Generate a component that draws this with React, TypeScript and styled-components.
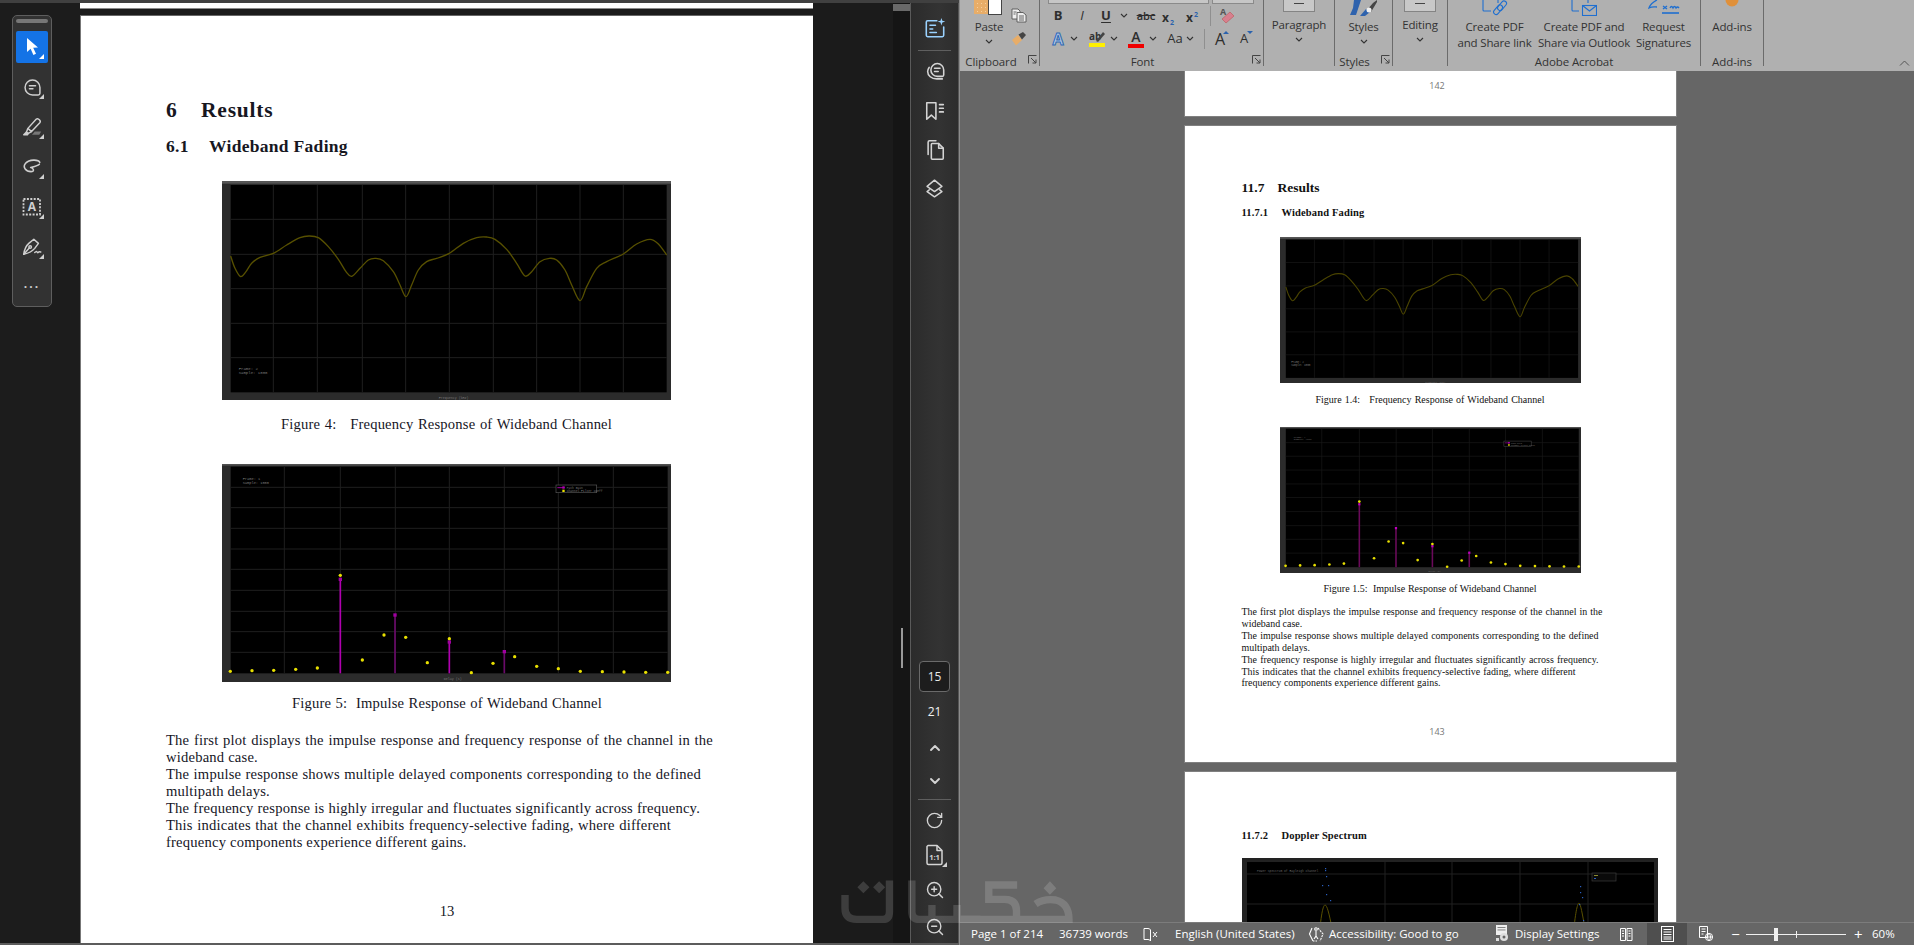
import React from "react";
import styled, { createGlobalStyle } from "styled-components";
import { ChevronUp, ChevronDown, RotateCw, ZoomIn, ZoomOut } from "lucide-react";

const Global = createGlobalStyle`
  html, body { margin: 0; padding: 0; width: 1914px; height: 945px; overflow: hidden; background: #1b1b1b; }
  #root { width: 1914px; height: 945px; }
  * { box-sizing: border-box; }
`;

const UI = `"Open Sans", "Noto Sans", "Liberation Sans", sans-serif`;
const SERIF = `"Liberation Serif", "Times New Roman", serif`;

const Screen = styled.div`
  position: relative; display: flex; width: 1914px; height: 945px; overflow: hidden;
`;

/* ---------- Acrobat side ---------- */
const Acrobat = styled.div`
  width: 959px; height: 945px; display: flex; background: #1b1b1b;
  border-top: 3px solid #404040; border-bottom: 2px solid #5c5c5c;
`;
const ToolColumn = styled.div`width: 80px; flex: none; padding: 12px 0 0 12px; background: #1c1c1c;`;
const ToolPanel = styled.div`
  width: 40px; height: 292px; padding: 3px 3px 0; background: #323232;
  border: 1px solid #5e5e5e; border-radius: 5px;
`;
const Handle = styled.div`height: 4px; margin-bottom: 4px; border-radius: 2px; background: #777;`;
const ToolSlot = styled.div`height: 40px; padding-top: 4px;`;
const ToolBox = styled.div<{ $active?: boolean; $plain?: boolean }>`
  position: relative; width: 32px; height: 32px; display: flex; align-items: center; justify-content: center;
  border-radius: 2px; background: ${p => (p.$active ? "#1473e6" : "transparent")};
  color: ${p => (p.$active ? "#fff" : "#cfcfcf")};
  &::after {
    content: ${p => (p.$plain ? "none" : '""')}; position: absolute; right: 4px; bottom: 4px; width: 5px; height: 5px;
    background: ${p => (p.$active ? "#fff" : "#cfcfcf")}; clip-path: polygon(100% 0, 100% 100%, 0 100%);
  }
`;
const Dots = styled.span`
  font: 700 12px/1 ${UI}; letter-spacing: 2px; color: #cfcfcf; transform: translateY(-3px);
`;
const PdfColumn = styled.div`width: 733px; flex: none; display: flex; flex-direction: column; overflow: hidden;`;
const PdfSliver = styled.div`height: 6px; flex: none; background: #fff; border-bottom: 1px solid #8a8a8a;`;
const PdfPage = styled.div`
  margin-top: 6px; flex: none; height: 932px; background: #fff; padding: 81px 0 0 86px;
  border-top: 1px solid #666; border-left: 1px solid #777; color: #16161f; font-family: ${SERIF};
`;
const PdfH1 = styled.h1`
  margin: 0 0 0 -1px; display: flex; font: 700 21.5px/26px ${SERIF}; letter-spacing: 0.8px; color: #17171f;
`;
const PdfH1Num = styled.span`width: 35px;`;
const PdfH2 = styled.h2`
  margin: 13px 0 0 -1px; display: flex; font: 700 17.5px/20px ${SERIF}; letter-spacing: 0.3px; color: #17171f;
`;
const PdfH2Num = styled.span`width: 43px;`;
const Fig = styled.div<{ $w: number; $h: number; $mt: number; $ml: number }>`
  width: ${p => p.$w}px; height: ${p => p.$h}px; margin-top: ${p => p.$mt}px; margin-left: ${p => p.$ml}px;
  svg { display: block; width: 100%; height: 100%; }
`;
const FitLine = styled.span<{ $w?: number }>`
  display: block; white-space: nowrap;
  ${p => (p.$w ? `width: ${p.$w}px; text-align: justify; text-align-last: justify;` : "")}
`;
const PdfCaption = styled.div<{ $w: number; $mt: number; $ml: number }>`
  width: ${p => p.$w}px; margin: ${p => p.$mt}px 0 0 ${p => p.$ml}px; font-size: 14.6px; letter-spacing: .18px; line-height: 18px;
  white-space: pre; text-align: justify; text-align-last: justify;
`;
const PdfBody = styled.div`margin: 20px 0 0 -1px; font-size: 14.6px; letter-spacing: .2px; line-height: 17px;`;
const PdfNumber = styled.div`margin: 51px 0 0 272px; width: 16px; font-size: 14.6px; line-height: 18px; text-align: center;`;
const Gutter = styled.div`width: 80px; flex: none; background: #1b1b1b;`;
const ScrollTrack = styled.div`position: relative; width: 17px; flex: none; background: #151515;`;
const ScrollThumb = styled.div`height: 7px; margin-top: 1px; background: #696969;`;
const PageMarker = styled.div`position: absolute; left: 8px; top: 625px; width: 2px; height: 40px; background: #9a9a9a;`;
const Rail = styled.div`
  width: 49px; flex: none; display: flex; flex-direction: column; justify-content: space-between; align-items: center;
  background: linear-gradient(90deg, #2b2b2b, #333 60%, #2d2d2d); border-left: 1px solid #5a5a5a; border-right: 1px solid #555;
  color: #d4d4d4;
`;
const RailGroup = styled.div<{ $pt?: number }>`width: 100%; display: flex; flex-direction: column; align-items: center; padding-top: ${p => p.$pt ?? 0}px;`;
const RailSlot = styled.div<{ $h: number; $blue?: boolean }>`
  height: ${p => p.$h}px; width: 100%; display: flex; align-items: center; justify-content: center; position: relative;
  color: ${p => (p.$blue ? "#9ad2ff" : "#d4d4d4")}; font: 12px ${UI};
`;
const RailSep = styled.div<{ $m: string }>`width: 33px; height: 1px; background: #5f5f5f; margin: ${p => p.$m};`;
const PageBox = styled.div`
  width: 31px; height: 31px; display: flex; align-items: center; justify-content: center; border-radius: 4px;
  border: 1px solid #6a6a6a; background: #1d1d1d; color: #e8e8e8; font: 12px ${UI};
`;
const RailNum = styled.span`color: #f2f2f2; font: 12px ${UI};`;
const MiniCorner = styled.span`
  position: absolute; left: 31px; bottom: 3px; width: 5px; height: 5px; background: #cfcfcf;
  clip-path: polygon(100% 0, 100% 100%, 0 100%);
`;

/* ---------- Word side ---------- */
const Word = styled.div`
  width: 955px; height: 945px; display: flex; flex-direction: column; border-left: 1px solid #8c8c8c; background: #666;
`;
const Ribbon = styled.div`height: 71px; flex: none; display: flex; background: #b0b0b0; position: relative; color: #333; font-family: ${UI};`;
const Group = styled.div<{ $w: number }>`
  position: relative; width: ${p => p.$w}px; height: 66px; flex: none; display: flex; flex-direction: column;
  border-right: 1px solid #6b6b6b;
`;
const GroupBody = styled.div`height: 54px; flex: none; display: flex; min-height: 0;`;
const GroupLabel = styled.div<{ $pr?: number }>`
  height: 12px; flex: none; padding-right: ${p => p.$pr ?? 0}px; text-align: center; font-size: 11.5px; line-height: 16px; letter-spacing: -.1px; color: #333; white-space: nowrap;
`;
const Launcher = styled.svg`position: absolute; right: 2px; bottom: 2px; width: 9px; height: 9px;`;
const BigBtn = styled.div<{ $w: number }>`
  width: ${p => p.$w}px; flex: none; display: flex; flex-direction: column; align-items: center;
  font-size: 11.5px; line-height: 16px; letter-spacing: -.15px; text-align: center; white-space: nowrap;
`;
const IconCrop = styled.div<{ $h: number }>`
  height: ${p => p.$h}px; flex: none; display: flex; align-items: flex-start; justify-content: center; overflow: hidden;
`;
const Chev = styled.svg`display: block; width: 8px; height: 5px; flex: none;`;
const ChevWrap = styled.div`height: 12px; display: flex; align-items: center; justify-content: center;`;
const SideCol = styled.div`width: 22px; margin-left: -10px; flex: none; display: flex; flex-direction: column; align-items: center; padding-top: 8px; gap: 8px;`;
const FontBody = styled.div`flex: 1; display: flex; flex-direction: column; padding-left: 6px;`;
const FontBoxes = styled.div`height: 4px; flex: none; display: flex; padding-left: 2px; gap: 3px;`;
const FontBox = styled.div<{ $w: number }>`width: ${p => p.$w}px; height: 4px; background: #c6c6c6; border: 1px solid #8a8a8a; border-top: 0;`;
const FontRow = styled.div`height: 23px; flex: none; display: flex; align-items: center;`;
const Glyph = styled.div<{ $w: number; $ml?: number }>`
  width: ${p => p.$w}px; margin-left: ${p => p.$ml ?? 0}px; flex: none; height: 22px; display: flex; flex-direction: column;
  align-items: center; justify-content: center; color: #2e2e2e; position: relative;
`;
const GB = styled.span<{ $i?: boolean; $u?: boolean; $s?: boolean; $size?: number; $weight?: number }>`
  font: ${p => (p.$i ? "italic " : "")}${p => p.$weight ?? 700} ${p => p.$size ?? 13}px/1 ${UI};
  ${p => (p.$u ? "text-decoration: underline; text-underline-offset: 2px;" : "")}
  ${p => (p.$s ? "text-decoration: line-through;" : "")}
`;
const Sub = styled.span<{ $up?: boolean }>`
  font: 700 7px/1 ${UI}; color: #2b62ad; position: relative; top: ${p => (p.$up ? -5 : 3)}px; margin-left: 1px;
`;
const FontSep = styled.div<{ $ml?: number }>`width: 1px; height: 20px; margin-left: ${p => p.$ml ?? 0}px; background: #8f8f8f; flex: none;`;
const ColorBar = styled.div<{ $c: string }>`width: 16px; height: 4px; background: ${p => p.$c}; margin-top: 0;`;
const OutlineA = styled.span`
  font: 700 16px/1 ${UI}; color: #b7cce6; -webkit-text-stroke: 1px #2e68b5;
`;
const Tri = styled.span<{ $down?: boolean }>`
  position: absolute; top: 3px; right: 3px; width: 0; height: 0; border-left: 3px solid transparent; border-right: 3px solid transparent;
  ${p => (p.$down ? "border-top: 3px solid #2b62ad;" : "border-bottom: 3px solid #2b62ad;")}
`;
const StubBox = styled.div<{ $w: number }>`width: ${p => p.$w}px; height: 12px; background: #c8c8c8; border: 1px solid #848484; border-top: 0; display: flex; justify-content: center; padding-top: 1px;`;
const StubMark = styled.div`width: 10px; height: 1px; background: #444; margin-top: 2px;`;
const CollapseBtn = styled.svg`position: absolute; right: 4px; bottom: 5px; width: 11px; height: 6px;`;

const DocArea = styled.div`
  flex: 1; min-height: 0; overflow: hidden; display: flex; flex-direction: column; align-items: center; padding-right: 14px; background: #666; gap: 10px;
`;
const WPage = styled.div<{ $h?: number; $pt?: number }>`
  width: 491px; flex: none; height: ${p => p.$h ?? 700}px; padding: ${p => p.$pt ?? 0}px 57px 0; background: #fff;
  box-shadow: 0 0 0 1px #808080; font-family: ${SERIF}; color: #111;
`;
const WPageNo = styled.div<{ $mt: number }>`margin-top: ${p => p.$mt}px; padding-left: 14px; text-align: center; font: 9px/12px ${UI}; color: #777;`;
const WH1 = styled.div`display: flex; font: 700 13.5px/18px ${SERIF};`;
const WH1Num = styled.span`width: 36px;`;
const WH2 = styled.div<{ $mt: number }>`display: flex; margin-top: ${p => p.$mt}px; font: 700 10.5px/14px ${SERIF}; letter-spacing: .15px;`;
const WH2Num = styled.span`width: 40px;`;
const WFig = styled.div<{ $w: number; $h: number; $mt: number }>`
  width: ${p => p.$w}px; height: ${p => p.$h}px; margin: ${p => p.$mt}px auto 0;
  svg { display: block; width: 100%; height: 100%; }
`;
const WCaption = styled.div<{ $w: number; $mt: number }>`
  width: ${p => p.$w}px; margin: ${p => p.$mt}px auto 0; font-size: 10px; line-height: 12px; white-space: pre; text-align: justify; text-align-last: justify;
`;
const WBody = styled.div`margin-top: 11px; font-size: 9.95px; line-height: 11.9px;`;

const Status = styled.div`
  height: 23px; flex: none; display: flex; align-items: center; padding-left: 11px; background: #666; border-top: 1px solid #7c7c7c;
  color: #fff; font: 11.5px/1 ${UI}; white-space: nowrap; position: relative;
`;
const StatusItem = styled.div<{ $w: number; $active?: boolean; $center?: boolean }>`
  width: ${p => p.$w}px; flex: none; height: 100%; display: flex; align-items: center; gap: 4px;
  ${p => (p.$center ? "justify-content: center;" : "")}
  ${p => (p.$active ? "background: #4f4f4f;" : "")}
`;
const ZoomGlyph = styled.span`font-size: 15px; line-height: 1;`;
const Slider = styled.div`
  position: relative; width: 100px; height: 1px; background: #f0f0f0; flex: none;
`;
const SliderThumb = styled.div`position: absolute; left: 28px; top: -6px; width: 4px; height: 13px; background: #f0f0f0;`;
const SliderTick = styled.div`position: absolute; left: 50px; top: -3px; width: 1px; height: 7px; background: #f0f0f0;`;
const Watermark = styled.svg`
  position: absolute; left: 840px; top: 878px; width: 234px; height: 49px; opacity: .15; pointer-events: none;
`;

/* ---------- charts ---------- */
type P = [number, number];
function smooth(pts: P[]): string {
  let d = `M${pts[0][0]},${pts[0][1]}`;
  for (let i = 0; i < pts.length - 1; i++) {
    const a = pts[Math.max(0, i - 1)], b = pts[i], c = pts[i + 1], e = pts[Math.min(pts.length - 1, i + 2)];
    d += ` C${b[0] + (c[0] - a[0]) / 6},${b[1] + (c[1] - a[1]) / 6} ${c[0] - (e[0] - b[0]) / 6},${c[1] - (e[1] - b[1]) / 6} ${c[0]},${c[1]}`;
  }
  return d;
}
const curve: P[] = [[26,225],[39,262],[56,287],[72,272],[89,247],[114,229],[154,217],[194,192],[234,170],[261,165],[289,170],[319,197],[349,235],[372,272],[389,286],[414,262],[439,237],[461,232],[484,239],[514,272],[534,312],[552,347],[569,312],[589,267],[614,242],[644,232],[682,217],[724,187],[764,170],[794,168],[819,175],[854,205],[884,247],[909,285],[929,272],[954,242],[982,232],[1004,237],[1029,267],[1049,312],[1074,359],[1094,317],[1124,262],[1154,242],[1204,219],[1244,189],[1284,175],[1309,189],[1334,222]];

const FreqChart = ({ dim }: { dim?: boolean }) => (
  <svg viewBox="0 0 1347 657" preserveAspectRatio="none" role="img" aria-label="Frequency response plot">
    <rect width="1347" height="657" fill="#2b2b2b" />
    <rect width="1347" height="8" fill="#565656" />
    <rect x="26" y="12" width="1308" height="622" fill="#000" />
    <g stroke={dim ? "#191919" : "#1f1f1f"} strokeWidth="3">
      {[154, 286, 421, 551, 682, 814, 944, 1074, 1204].map(x => <line key={x} x1={x} x2={x} y1="12" y2="634" />)}
      {[115, 220, 323, 427, 530].map(y => <line key={y} x1="26" x2="1334" y1={y} y2={y} />)}
    </g>
    <path d={smooth(curve)} fill="none" stroke={dim ? "#4a4400" : "#575000"} strokeWidth={dim ? 5 : 4} />
    <g fill="#777" fontSize="12" fontFamily="Liberation Mono, monospace">
      <text x="50" y="568">Frame: 2</text>
      <text x="50" y="580">Sample: 1000</text>
      <text x="650" y="655" fontSize="10">Frequency (kHz)</text>
    </g>
  </svg>
);

const stems: [number, number, string][] = [[355, 346, "#b000b0"], [519, 453, "#6a0a6a"], [682, 534, "#b000b0"], [847, 563, "#6a0a6a"]];
const yellow: P[] = [[25,622],[90,620],[155,619],[221,616],[286,612],[355,334],[421,588],[486,513],[551,520],[616,596],[682,524],[748,626],[813,598],[878,578],[944,607],[1009,614],[1075,622],[1141,623],[1206,624],[1271,625],[1337,625]];
const ImpulseChart = ({ dim }: { dim?: boolean }) => (
  <svg viewBox="0 0 1347 654" preserveAspectRatio="none" role="img" aria-label="Impulse response plot">
    <rect width="1347" height="654" fill="#2b2b2b" />
    <rect width="1347" height="5" fill="#505050" />
    <rect x="26" y="8" width="1311" height="620" fill="#000" />
    <g stroke={dim ? "#191919" : "#1f1f1f"} strokeWidth="3">
      {[187, 355, 520, 682, 847, 1009, 1174].map(x => <line key={x} x1={x} x2={x} y1="8" y2="628" />)}
      {[70, 131, 193, 255, 316, 379, 442, 503, 565].map(y => <line key={y} x1="26" x2="1337" y1={y} y2={y} />)}
    </g>
    {stems.map(([x, t, c]) => (
      <g key={x}>
        <line x1={x} x2={x} y1={t} y2="628" stroke={dim ? "#6a0a5a" : c} strokeWidth={dim ? 7 : 5} />
        <rect x={x - 5} y={t - 5} width="10" height="10" fill={dim ? "#c000c0" : "#a000a0"} />
      </g>
    ))}
    {yellow.map(([x, y]) => <circle key={x} cx={x} cy={y} r={dim ? 6 : 5} fill="#e8e000" />)}
    <rect x="1002" y="63" width="122" height="23" fill="#000" stroke="#555" strokeWidth="2" />
    <line x1="1006" x2="1028" y1="71" y2="71" stroke="#a000a0" strokeWidth="3" />
    <rect x="1021" y="67" width="7" height="7" fill="#b000b0" />
    <rect x="1021" y="77" width="7" height="7" fill="#e8e000" />
    <g fill="#777" fontSize="9" fontFamily="Liberation Mono, monospace">
      <text x="1034" y="74">Path Gain</text>
      <text x="1034" y="84">Channel Filter Coeff</text>
      <text x="62" y="48" fontSize="11">Frame: 1</text>
      <text x="62" y="60" fontSize="11">Sample: 1000</text>
      <text x="665" y="648" fontSize="10">Delay (s)</text>
    </g>
  </svg>
);

const dopplerBlue: P[] = [[83,10],[83,12],[84,18],[80,27],[86,27],[88,42],[84,36]];
const DopplerChart = () => (
  <svg viewBox="0 0 416 210" preserveAspectRatio="none" role="img" aria-label="Doppler spectrum plot">
    <rect width="416" height="210" fill="#222" />
    <rect x="5" y="4" width="407" height="206" fill="#000" />
    <g stroke="#202020" strokeWidth="1">
      {[143, 210, 278, 346].map(x => <line key={x} x1={x} x2={x} y1="4" y2="210" />)}
      {[16, 46].map(y => <line key={y} x1="5" x2="412" y1={y} y2={y} />)}
    </g>
    <text x="15" y="14" fontSize="3" fill="#666" fontFamily="Liberation Mono, monospace">Power Spectrum of Rayleigh Channel</text>
    <path d="M78,70 C80,50 82,47 83,47 C85,47 87,55 90,70" fill="none" stroke="#5a5000" strokeWidth="1" />
    <path d="M332,70 C334,50 336,45 337,45 C339,47 340,55 343,70" fill="none" stroke="#5a5000" strokeWidth="1" />
    {dopplerBlue.map(([x, y], i) => <rect key={i} x={x} y={y} width="1.2" height="1.2" fill="#2a5fc0" />)}
    {[[338, 28], [338, 34], [340, 39], [337, 46], [341, 62]].map(([x, y], i) => <rect key={i} x={x} y={y} width="1.2" height="1.2" fill="#2a5fc0" />)}
    <rect x="350" y="15" width="24" height="8" fill="#0a0a0a" stroke="#444" strokeWidth=".6" />
    <rect x="352" y="17" width="4" height="1" fill="#8a8a30" />
    <rect x="352" y="20" width="2" height="1" fill="#2a5fc0" />
  </svg>
);

/* ---------- icons ---------- */
type IconProps = { size?: number };
const base = (s: number) => ({ width: s, height: s, viewBox: "0 0 24 24", fill: "none", stroke: "currentColor", strokeWidth: 1.7, strokeLinecap: "round" as const, strokeLinejoin: "round" as const });

const ArrowI = () => (
  <svg width="16" height="20" viewBox="0 0 16 20"><path d="M3 1 L3 15 L6.6 11.8 L9.4 18 L12 16.8 L9.2 10.8 L14 10.4 Z" fill="#fff" /></svg>
);
const CommentI = ({ size = 21 }: IconProps) => (
  <svg {...base(size)}><path d="M12 3.5a8.5 8.5 0 0 0 0 17h6.5a2 2 0 0 0 2-2V12a8.5 8.5 0 0 0-8.5-8.5z" /><path d="M8.5 10h7M8.5 13.5h4" /></svg>
);
const HighlightI = () => (
  <svg width="22" height="22" viewBox="0 0 24 24" fill="none" stroke="currentColor" strokeWidth="1.6" strokeLinejoin="round">
    <path d="M7.5 13.5 L16.5 3.5 Q18 2 20 4 Q21.8 5.8 20.5 7.3 L11.5 17 Z" />
    <path d="M7.5 13.5 L6 17.5 L8 19 L11.5 17" />
    <path d="M6 17.5 L3 20.5 L7 20.5 L8 19" fill="currentColor" />
    <path d="M12 20.5 L15 17 L22 17 L20 20.5 Z" fill="#777" stroke="none" />
  </svg>
);
const LassoI = () => (
  <svg {...base(22)}><path d="M20.5 7 C19 3.5 9 3.5 5 8 C1.5 12 5 17.5 12 17 C14.5 16.8 14 13 10.5 12.5 C13 12 18 11 20 9" /></svg>
);
const TextBoxI = () => (
  <svg width="20" height="20" viewBox="0 0 20 20">
    <rect x="1.5" y="2" width="16.5" height="15.5" fill="none" stroke="#cfcfcf" strokeWidth="1.8" strokeDasharray="2 1.4" />
    <text x="10" y="14" textAnchor="middle" fontFamily="Open Sans, sans-serif" fontWeight="700" fontSize="12" fill="#cfcfcf">A</text>
  </svg>
);
const PenSignI = () => (
  <svg {...base(22)} strokeWidth={1.6}><path d="M14 3.5 L19 8 L15 13.5 C12 17 7 19 3 20 C3.5 16 5 11 8.5 8 Z" /><path d="M3 20 L9 13" /><circle cx="10" cy="12" r="1.4" /><path d="M15 18c1-1 2-1.5 2.5-.5s1 .8 1.5.2 1-.7 2.5-.2" /></svg>
);
const AiI = () => (
  <svg width="22" height="22" viewBox="0 0 24 24" fill="none" stroke="currentColor" strokeWidth="1.7" strokeLinecap="round">
    <path d="M14 4 H4 Q2.5 4 2.5 5.5 V20 Q2.5 21.5 4 21.5 H20 Q21.5 21.5 21.5 20 V11" />
    <path d="M6.5 9h6M6.5 13h3M6.5 17h7" />
    <path d="M19 1 L20 4.2 L23.2 5 L20 6 L19 9.4 L18 6 L14.8 5 L18 4.2 Z" fill="currentColor" stroke="none" />
  </svg>
);
const StackCommentI = () => (
  <svg {...base(22)}><path d="M14.5 2.8a7 7 0 0 0-7 7 7 7 0 0 0 7 7H20a1.5 1.5 0 0 0 1.5-1.5V9.8a7 7 0 0 0-7-7z" /><path d="M11.5 8h6M11.5 11.5h4" /><path d="M5.6 7A7.5 7.5 0 0 0 4 11.5C4 16 8 19.5 14 19.5h6" /></svg>
);
const BookmarkListI = () => (
  <svg {...base(22)}><path d="M3 3h10v18l-5-4.5L3 21z" /><path d="M17 5h4M17 9h4M17 13h4" strokeWidth="1.9" /></svg>
);
const PagesI = () => (
  <svg {...base(22)}><path d="M9 5h7l5 5v11a1 1 0 0 1-1 1H9a1 1 0 0 1-1-1V6a1 1 0 0 1 1-1z" /><path d="M16 5v5h5" /><path d="M4.5 17V3.5A1.5 1.5 0 0 1 6 2h7" /></svg>
);
const LayersI = () => (
  <svg {...base(21)}><path d="M12 2.5 L20.5 9.5 L12 15.5 L3.5 9.5 Z" /><path d="M6 13.5 L3.5 15.5 L12 21.5 L20.5 15.5 L18 13.5" /></svg>
);
const OneToOneI = () => (
  <svg width="20" height="22" viewBox="0 0 20 22" fill="none" stroke="currentColor" strokeWidth="1.5" strokeLinejoin="round">
    <path d="M3 1.5h9l5 5V19a1.5 1.5 0 0 1-1.5 1.5h-12A1.5 1.5 0 0 1 2 19V2.5z" />
    <path d="M12 1.5v5h5" />
    <text x="9.5" y="16" textAnchor="middle" fontFamily="Open Sans, sans-serif" fontWeight="700" fontSize="7.5" fill="currentColor" stroke="none">1:1</text>
  </svg>
);
const ChevI = () => <Chev viewBox="0 0 8 5"><path d="M1 1 L4 4 L7 1" fill="none" stroke="#333" strokeWidth="1.1" /></Chev>;
const LauncherI = () => (
  <Launcher viewBox="0 0 9 9"><path d="M.5 8.5 V.5 H8.5 M3 3 L8 8 M8 4.5 V8 H4.5" fill="none" stroke="#444" strokeWidth="1" /></Launcher>
);
const PasteI = () => (
  <svg width="30" height="15" viewBox="0 0 30 15">
    <rect x="0" y="0" width="14" height="14" fill="#e8ad68" />
    <g fill="#f5cf9e">{[3, 7, 11].map(x => [3, 7, 11].map(y => <rect key={`${x}${y}`} x={x} y={y} width="1" height="1" />))}</g>
    <rect x="14.5" y="-1" width="13" height="15.5" fill="#fff" stroke="#444" />
  </svg>
);
const CopyI = () => (
  <svg width="16" height="15" viewBox="0 0 16 15" fill="#eee" stroke="#555" strokeWidth=".9">
    <path d="M1 1h6l2 2v8H1z" /><path d="M6 4.5h6l3 2.5v7H6z" /><path d="M8 8h5M8 10h5M8 12h5" fill="none" /><path d="M2.5 4h3M2.5 6h2" fill="none" />
  </svg>
);
const PainterI = () => (
  <svg width="16" height="15" viewBox="0 0 16 15"><path d="M1 9 L7 4 L11 9 L5 14.5 Z" fill="#e8ad68" /><path d="M7.5 3.5 L12 1 L15 4 L11 8.5 Z" fill="#444" /></svg>
);
const EraserI = () => (
  <svg width="16" height="18" viewBox="0 0 16 18">
    <text x="1" y="8" fontFamily="Open Sans, sans-serif" fontSize="9" fontWeight="700" fill="#555">A</text>
    <path d="M3 12 L11 5 L15 9 L7 16 Z" fill="#d87f8e" stroke="#b55" strokeWidth=".6" />
  </svg>
);
const PenMark = () => (
  <svg width="16" height="13" viewBox="0 0 16 13">
    <text x="0" y="10" fontFamily="Open Sans, sans-serif" fontSize="10" fontWeight="700" fill="#333">ab</text>
    <path d="M7 11 L14 2 L16 4 L9 12 Z" fill="#444" />
  </svg>
);
const StylesI = () => (
  <svg width="28" height="16" viewBox="0 0 28 16">
    <path d="M4 0 H11 L6 15 H0 L3 8 Z" fill="#2e62ad" />
    <path d="M10 16 L16 9 L20 12 L15 16 Z" fill="#2e62ad" />
    <path d="M17 10 L23 3 L27 0 L27 2 L21 12 Z" fill="#444" />
    <circle cx="19" cy="10" r="2.5" fill="#eee" />
  </svg>
);
const ShareLinkI = () => (
  <svg width="26" height="16" viewBox="0 0 26 16" fill="none" stroke="#1f6fd0" strokeWidth="1.1">
    <path d="M1 0 V10 Q1 11 2 11 H9" /><path d="M16 0 V3" />
    <rect x="14" y="4" width="5" height="11" rx="2.5" transform="rotate(40 16 9)" />
    <rect x="18" y="0" width="5" height="11" rx="2.5" transform="rotate(40 20 5)" />
  </svg>
);
const ShareMailI = () => (
  <svg width="26" height="16" viewBox="0 0 26 16" fill="none" stroke="#1f6fd0" strokeWidth="1.1">
    <path d="M1 0 V10 Q1 11 2 11 H8" />
    <rect x="11.5" y="5.5" width="14" height="10" />
    <path d="M11.5 5.5 L18.5 11 L25.5 5.5" />
    <path d="M17 0 V3" />
  </svg>
);
const SignI = () => (
  <svg width="32" height="16" viewBox="0 0 32 16" fill="none" stroke="#1f6fd0" strokeWidth="1.3">
    <path d="M9 0 C5 2 2 5 1 8 C5 6 7 7 9 7" />
    <path d="M15 6 L19 9 M19 6 L15 9" /><path d="M22 8 q1.5-3 3 0 q1.5-3 3 0 q1.5-2 3 0" />
    <path d="M14 13 H31" strokeWidth="1.6" />
  </svg>
);
const AddInI = () => <svg width="14" height="7" viewBox="0 0 14 7"><circle cx="7" cy="0" r="6.5" fill="#e0903a" /></svg>;

const ProofI = () => (
  <svg width="16" height="15" viewBox="0 0 16 15" fill="none" stroke="#fff" strokeWidth="1"><path d="M1 1.5 h4 q2 0 2.5 1.5 V14 q-.5-1.5-2.5-1.5 H1z" /><path d="M10 5 l4 5 M14 5 l-4 5" /></svg>
);
const AccessI = () => (
  <svg width="17" height="17" viewBox="0 0 17 17" fill="none" stroke="#fff" strokeWidth="1.1"><path d="M4 2 L1.5 8 L5 15" /><path d="M5 15 L9 15" strokeDasharray="1.5 1" /><path d="M10 2 L15 8 L12 15" strokeDasharray="2 1" /><circle cx="8" cy="3" r="1.3" /><path d="M8 5v5l-2 3M8 10l2 3" /></svg>
);
const DisplayI = () => (
  <svg width="16" height="18" viewBox="0 0 16 18"><rect x="1" y="0" width="11" height="10" fill="#eee" /><rect x="2.5" y="2" width="8" height=".9" fill="#777" /><rect x="2.5" y="4.5" width="8" height=".9" fill="#777" /><circle cx="9" cy="12" r="4" fill="#ddd" /><circle cx="9" cy="12" r="1.5" fill="#666" /><rect x="1" y="13" width="3" height="3" fill="#ddd" /></svg>
);
const ReadI = () => (
  <svg width="15" height="15" viewBox="0 0 15 15" fill="none" stroke="#fff" strokeWidth="1"><path d="M1.5 1.5 h5 v12 h-5z M8 1.5 h5 v12 h-5z" /><path d="M3 4h2M3 6.5h2M3 9h2M9.5 4h2M9.5 6.5h2M9.5 9h2" /></svg>
);
const PrintI = () => (
  <svg width="13" height="16" viewBox="0 0 13 16" fill="none" stroke="#fff" strokeWidth="1"><rect x=".5" y=".5" width="12" height="15" /><path d="M2.5 3.5h8M2.5 6h8M2.5 8.5h8M2.5 11h8M2.5 13h8" /></svg>
);
const WebI = () => (
  <svg width="16" height="16" viewBox="0 0 16 16" fill="none" stroke="#fff" strokeWidth="1"><path d="M1.5 .5h8v11h-8z" /><path d="M3.5 3h4M3.5 5.5h4M3.5 8h2" /><circle cx="11" cy="11" r="3.6" /><path d="M7.5 11h7M11 7.5c-2 2-2 5 0 7M11 7.5c2 2 2 5 0 7" /></svg>
);

const pdfLines: [string, number?][] = [
  ["The first plot displays the impulse response and frequency response of the channel in the", 547],
  ["wideband case."],
  ["The impulse response shows multiple delayed components corresponding to the defined", 535],
  ["multipath delays."],
  ["The frequency response is highly irregular and fluctuates significantly across frequency.", 534],
  ["This indicates that the channel exhibits frequency-selective fading, where different", 505],
  ["frequency components experience different gains.", 299],
];
const wordLines: [string, number?][] = [
  ["The first plot displays the impulse response and frequency response of the channel in the", 361],
  ["wideband case."],
  ["The impulse response shows multiple delayed components corresponding to the defined", 357],
  ["multipath delays."],
  ["The frequency response is highly irregular and fluctuates significantly across frequency.", 357],
  ["This indicates that the channel exhibits frequency-selective fading, where different", 334],
  ["frequency components experience different gains.", 199],
];

export default function App() {
  return (
    <Screen>
      <Global />
      <Acrobat>
        <ToolColumn>
          <ToolPanel>
            <Handle />
            <ToolSlot><ToolBox $active><ArrowI /></ToolBox></ToolSlot>
            <ToolSlot><ToolBox><CommentI /></ToolBox></ToolSlot>
            <ToolSlot><ToolBox><HighlightI /></ToolBox></ToolSlot>
            <ToolSlot><ToolBox><LassoI /></ToolBox></ToolSlot>
            <ToolSlot><ToolBox><TextBoxI /></ToolBox></ToolSlot>
            <ToolSlot><ToolBox><PenSignI /></ToolBox></ToolSlot>
            <ToolSlot><ToolBox $plain><Dots>...</Dots></ToolBox></ToolSlot>
          </ToolPanel>
        </ToolColumn>
        <PdfColumn>
          <PdfSliver />
          <PdfPage>
            <PdfH1><PdfH1Num>6</PdfH1Num>Results</PdfH1>
            <PdfH2><PdfH2Num>6.1</PdfH2Num>Wideband Fading</PdfH2>
            <Fig $w={449} $h={219} $mt={25} $ml={55}><FreqChart /></Fig>
            <PdfCaption $w={331} $mt={15} $ml={114}>{"Figure 4:   Frequency Response of Wideband Channel"}</PdfCaption>
            <Fig $w={449} $h={218} $mt={31} $ml={55}><ImpulseChart /></Fig>
            <PdfCaption $w={310} $mt={12} $ml={125}>{"Figure 5:  Impulse Response of Wideband Channel"}</PdfCaption>
            <PdfBody>
              {pdfLines.map(([t, w]) => <FitLine key={t} $w={w}>{t}</FitLine>)}
            </PdfBody>
            <PdfNumber>13</PdfNumber>
          </PdfPage>
        </PdfColumn>
        <Gutter />
        <ScrollTrack>
          <ScrollThumb />
          <PageMarker />
        </ScrollTrack>
        <Rail>
          <RailGroup $pt={10}>
            <RailSlot $h={30} $blue><AiI /></RailSlot>
            <RailSep $m="7px 0 1px" />
            <RailSlot $h={39}><StackCommentI /></RailSlot>
            <RailSlot $h={39}><BookmarkListI /></RailSlot>
            <RailSlot $h={39}><PagesI /></RailSlot>
            <RailSlot $h={39}><LayersI /></RailSlot>
          </RailGroup>
          <RailGroup>
            <PageBox>15</PageBox>
            <RailSlot $h={38}><RailNum>21</RailNum></RailSlot>
            <RailSlot $h={36}><ChevronUp size={16} strokeWidth={2.8} /></RailSlot>
            <RailSlot $h={30}><ChevronDown size={16} strokeWidth={2.8} /></RailSlot>
            <RailSep $m="3px 0 0" />
            <RailSlot $h={40}><RotateCw size={19} strokeWidth={1.7} /></RailSlot>
            <RailSlot $h={30}><OneToOneI /><MiniCorner /></RailSlot>
            <RailSlot $h={40}><ZoomIn size={20} strokeWidth={1.7} /></RailSlot>
            <RailSlot $h={33}><ZoomOut size={20} strokeWidth={1.7} /></RailSlot>
          </RailGroup>
        </Rail>
      </Acrobat>

      <Word>
        <Ribbon>
          <Group $w={80}>
            <GroupBody>
              <BigBtn $w={58}>
                <IconCrop $h={19}><PasteI /></IconCrop>
                <span>Paste</span>
                <ChevWrap><ChevI /></ChevWrap>
              </BigBtn>
              <SideCol><CopyI /><PainterI /></SideCol>
            </GroupBody>
            <GroupLabel $pr={17}>Clipboard</GroupLabel>
            <LauncherI />
          </Group>
          <Group $w={224}>
            <GroupBody>
              <FontBody>
                <FontBoxes>
                  <FontBox $w={161} />
                  <FontBox $w={42} />
                </FontBoxes>
                <FontRow>
                  <Glyph $w={24}><GB>B</GB></Glyph>
                  <Glyph $w={24}><GB $i $weight={400}>I</GB></Glyph>
                  <Glyph $w={24}><GB $u>U</GB></Glyph>
                  <Glyph $w={12}><ChevI /></Glyph>
                  <Glyph $w={32}><GB $s $size={11} $weight={600}>abc</GB></Glyph>
                  <Glyph $w={12}><span><GB $size={12}>x</GB><Sub>2</Sub></span></Glyph>
                  <Glyph $w={36}><span><GB $size={12}>x</GB><Sub $up>2</Sub></span></Glyph>
                  <FontSep />
                  <Glyph $w={31}><EraserI /></Glyph>
                </FontRow>
                <FontRow>
                  <Glyph $w={24}><OutlineA>A</OutlineA></Glyph>
                  <Glyph $w={8}><ChevI /></Glyph>
                  <Glyph $w={26} $ml={6}><PenMark /><ColorBar $c="#ffef00" /></Glyph>
                  <Glyph $w={8}><ChevI /></Glyph>
                  <Glyph $w={26} $ml={5}><GB $size={14} $weight={600}>A</GB><ColorBar $c="#f00000" /></Glyph>
                  <Glyph $w={8}><ChevI /></Glyph>
                  <Glyph $w={20} $ml={8}><GB $size={13} $weight={400}>Aa</GB></Glyph>
                  <Glyph $w={8} $ml={1}><ChevI /></Glyph>
                  <FontSep $ml={10} />
                  <Glyph $w={24} $ml={3}><GB $size={16} $weight={400}>A</GB><Tri /></Glyph>
                  <Glyph $w={24}><GB $size={13} $weight={400}>A</GB><Tri $down /></Glyph>
                </FontRow>
              </FontBody>
            </GroupBody>
            <GroupLabel $pr={18}>Font</GroupLabel>
            <LauncherI />
          </Group>
          <Group $w={71}>
            <GroupBody>
              <BigBtn $w={70}>
                <IconCrop $h={17}><StubBox $w={32}><StubMark /></StubBox></IconCrop>
                <span>Paragraph</span>
                <ChevWrap><ChevI /></ChevWrap>
              </BigBtn>
            </GroupBody>
          </Group>
          <Group $w={58}>
            <GroupBody>
              <BigBtn $w={57}>
                <IconCrop $h={19}><StylesI /></IconCrop>
                <span>Styles</span>
                <ChevWrap><ChevI /></ChevWrap>
              </BigBtn>
            </GroupBody>
            <GroupLabel $pr={18}>Styles</GroupLabel>
            <LauncherI />
          </Group>
          <Group $w={55}>
            <GroupBody>
              <BigBtn $w={54}>
                <IconCrop $h={17}><StubBox $w={32}><StubMark /></StubBox></IconCrop>
                <span>Editing</span>
                <ChevWrap><ChevI /></ChevWrap>
              </BigBtn>
            </GroupBody>
          </Group>
          <Group $w={253}>
            <GroupBody>
              <BigBtn $w={93}><IconCrop $h={19}><ShareLinkI /></IconCrop><span>Create PDF</span><span>and Share link</span></BigBtn>
              <BigBtn $w={86}><IconCrop $h={19}><ShareMailI /></IconCrop><span>Create PDF and</span><span>Share via Outlook</span></BigBtn>
              <BigBtn $w={73}><IconCrop $h={19}><SignI /></IconCrop><span>Request</span><span>Signatures</span></BigBtn>
            </GroupBody>
            <GroupLabel>Adobe Acrobat</GroupLabel>
          </Group>
          <Group $w={63}>
            <GroupBody>
              <BigBtn $w={62}><IconCrop $h={19}><AddInI /></IconCrop><span>Add-ins</span></BigBtn>
            </GroupBody>
            <GroupLabel>Add-ins</GroupLabel>
          </Group>
          <CollapseBtn viewBox="0 0 11 6"><path d="M1 5.5 L5.5 1 L10 5.5" fill="none" stroke="#555" strokeWidth="1" /></CollapseBtn>
        </Ribbon>

        <DocArea>
          <WPage $h={45} $pt={9}>
            <WPageNo $mt={0}>142</WPageNo>
          </WPage>
          <WPage $h={636} $pt={53}>
            <WH1><WH1Num>11.7</WH1Num>Results</WH1>
            <WH2 $mt={9}><WH2Num>11.7.1</WH2Num>Wideband Fading</WH2>
            <WFig $w={301} $h={146} $mt={17}><FreqChart dim /></WFig>
            <WCaption $w={229} $mt={11}>{"Figure 1.4:   Frequency Response of Wideband Channel"}</WCaption>
            <WFig $w={301} $h={146} $mt={21}><ImpulseChart dim /></WFig>
            <WCaption $w={213} $mt={10}>{"Figure 1.5:  Impulse Response of Wideband Channel"}</WCaption>
            <WBody>
              {wordLines.map(([t, w]) => <FitLine key={t} $w={w}>{t}</FitLine>)}
            </WBody>
            <WPageNo $mt={37}>143</WPageNo>
          </WPage>
          <WPage $h={300} $pt={57}>
            <WH2 $mt={0}><WH2Num>11.7.2</WH2Num>Doppler Spectrum</WH2>
            <WFig $w={416} $h={210} $mt={15}><DopplerChart /></WFig>
          </WPage>
        </DocArea>

        <Status>
          <StatusItem $w={88}>Page 1 of 214</StatusItem>
          <StatusItem $w={84}>36739 words</StatusItem>
          <StatusItem $w={32}><ProofI /></StatusItem>
          <StatusItem $w={133}>English (United States)</StatusItem>
          <StatusItem $w={187}><AccessI />Accessibility: Good to go</StatusItem>
          <StatusItem $w={118}><DisplayI />Display Settings</StatusItem>
          <StatusItem $w={27} $center><ReadI /></StatusItem>
          <StatusItem $w={7} />
          <StatusItem $w={40} $center $active><PrintI /></StatusItem>
          <StatusItem $w={38} $center><WebI /></StatusItem>
          <StatusItem $w={21} $center><ZoomGlyph>−</ZoomGlyph></StatusItem>
          <StatusItem $w={108}><Slider><SliderThumb /><SliderTick /></Slider></StatusItem>
          <StatusItem $w={18}><ZoomGlyph>+</ZoomGlyph></StatusItem>
          <StatusItem $w={30}>60%</StatusItem>
        </Status>
      </Word>

      <Watermark viewBox="120 715 700 145" role="img" aria-label="Khamsat logo">
        <g fill="none" stroke="#fff" strokeWidth="22">
          <path d="M135,765 V805 Q135,838 170,838 H248 Q268,838 268,815 V722" />
          <path d="M335,722 V815 Q335,838 358,838 H540" />
          <path d="M395,795 V838 M470,795 V838" />
          <path d="M650,735 H565 V778 H612 Q648,778 648,812 V838 H480" />
          <path d="M648,838 H805 Q805,790 765,780 Q730,775 705,792" />
        </g>
        <g fill="#fff">
          <path d="M190,724 L208,742 L190,760 L172,742 Z" />
          <path d="M237,724 L255,742 L237,760 L219,742 Z" />
          <path d="M748,724 L767,745 L748,764 L729,745 Z" />
        </g>
      </Watermark>
    </Screen>
  );
}
